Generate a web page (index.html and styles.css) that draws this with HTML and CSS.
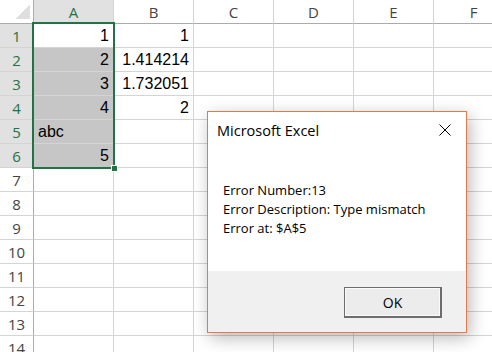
FILE: index.html
```html
<!DOCTYPE html>
<html lang="en">
<head>
    <meta charset="UTF-8">
    <title>Microsoft Excel - Error</title>
    <link rel="stylesheet" href="styles.css">
</head>
<body>
    <div class="sheet">
        <div class="row head-row">
            <div class="corner"><span class="corner-mark"></span></div>
            <div class="col-head active">A</div>
            <div class="col-head">B</div>
            <div class="col-head">C</div>
            <div class="col-head">D</div>
            <div class="col-head">E</div>
            <div class="col-head">F</div>
        </div>
        <div class="row">
            <div class="row-head active">1</div>
            <div class="cell num">1</div>
            <div class="cell num">1</div>
            <div class="cell"></div><div class="cell"></div><div class="cell"></div><div class="cell"></div>
        </div>
        <div class="row">
            <div class="row-head active">2</div>
            <div class="cell num sel">2</div>
            <div class="cell num">1.414214</div>
            <div class="cell"></div><div class="cell"></div><div class="cell"></div><div class="cell"></div>
        </div>
        <div class="row">
            <div class="row-head active">3</div>
            <div class="cell num sel">3</div>
            <div class="cell num">1.732051</div>
            <div class="cell"></div><div class="cell"></div><div class="cell"></div><div class="cell"></div>
        </div>
        <div class="row">
            <div class="row-head active">4</div>
            <div class="cell num sel">4</div>
            <div class="cell num">2</div>
            <div class="cell"></div><div class="cell"></div><div class="cell"></div><div class="cell"></div>
        </div>
        <div class="row">
            <div class="row-head active">5</div>
            <div class="cell sel">abc</div>
            <div class="cell"></div><div class="cell"></div><div class="cell"></div><div class="cell"></div><div class="cell"></div>
        </div>
        <div class="row">
            <div class="row-head active">6</div>
            <div class="cell num sel">5</div>
            <div class="cell"></div><div class="cell"></div><div class="cell"></div><div class="cell"></div><div class="cell"></div>
        </div>
        <div class="row">
            <div class="row-head">7</div>
            <div class="cell"></div><div class="cell"></div><div class="cell"></div><div class="cell"></div><div class="cell"></div><div class="cell"></div>
        </div>
        <div class="row">
            <div class="row-head">8</div>
            <div class="cell"></div><div class="cell"></div><div class="cell"></div><div class="cell"></div><div class="cell"></div><div class="cell"></div>
        </div>
        <div class="row">
            <div class="row-head">9</div>
            <div class="cell"></div><div class="cell"></div><div class="cell"></div><div class="cell"></div><div class="cell"></div><div class="cell"></div>
        </div>
        <div class="row">
            <div class="row-head">10</div>
            <div class="cell"></div><div class="cell"></div><div class="cell"></div><div class="cell"></div><div class="cell"></div><div class="cell"></div>
        </div>
        <div class="row">
            <div class="row-head">11</div>
            <div class="cell"></div><div class="cell"></div><div class="cell"></div><div class="cell"></div><div class="cell"></div><div class="cell"></div>
        </div>
        <div class="row">
            <div class="row-head">12</div>
            <div class="cell"></div><div class="cell"></div><div class="cell"></div><div class="cell"></div><div class="cell"></div><div class="cell"></div>
        </div>
        <div class="row">
            <div class="row-head">13</div>
            <div class="cell"></div><div class="cell"></div><div class="cell"></div><div class="cell"></div><div class="cell"></div><div class="cell"></div>
        </div>
        <div class="row">
            <div class="row-head">14</div>
            <div class="cell"></div><div class="cell"></div><div class="cell"></div><div class="cell"></div><div class="cell"></div><div class="cell"></div>
        </div>

        <!-- selection A1:A6 -->
        <div class="selection"><span class="fill-handle"></span></div>
    </div>

    <div class="dialog">
        <div class="dialog-title">
            <span>Microsoft Excel</span>
            <svg class="close" width="12" height="12" viewBox="0 0 12 12">
                <path d="M0.5 0.5 L11.5 11.5 M11.5 0.5 L0.5 11.5" stroke="#000" stroke-width="1" fill="none"/>
            </svg>
        </div>
        <div class="dialog-body">
            <div>Error Number:13</div>
            <div>Error Description: Type mismatch</div>
            <div>Error at: $A$5</div>
        </div>
        <div class="dialog-footer">
            <button class="ok">OK</button>
        </div>
    </div>
</body>
</html>
```

FILE: styles.css
```css
body {
    margin: 0;
    width: 492px;
    height: 352px;
    overflow: hidden;
    background: #fff;
    font-family: "Liberation Sans", Arial, sans-serif;
}
.sheet {
    position: relative;
    width: 492px;
    height: 352px;
    overflow: hidden;
}
.row {
    display: grid;
    grid-template-columns: 34px repeat(6, 80px);
    height: 24px;
}
.row > div {
    box-sizing: border-box;
    border-right: 1px solid #d4d4d4;
    border-bottom: 1px solid #d4d4d4;
}
.head-row > div {
    border-bottom-color: #ababab;
}
.corner {
    display: flex;
    justify-content: flex-end;
    align-items: flex-end;
    padding: 0 3px 4px 0;
    border-right-color: #ababab !important;
}
.corner-mark {
    width: 15px;
    height: 14px;
    background: linear-gradient(to bottom right, transparent 50%, #dfdfdf 50%);
}
.col-head,
.row-head {
    display: flex;
    align-items: center;
    justify-content: center;
    font-family: "Open Sans", "Noto Sans", sans-serif;
    font-size: 15px;
    color: #444;
}
.row-head {
    border-right-color: #ababab !important;
}
.col-head.active,
.row-head.active {
    background: #e1e1e1;
    color: #217346;
}
.cell {
    display: flex;
    align-items: center;
    padding: 1px 4px 0;
    font-size: 16px;
    color: #000;
}
.cell.num {
    justify-content: flex-end;
}
.cell.sel {
    background: #c6c6c6;
}
.selection {
    position: absolute;
    left: 32px;
    top: 22px;
    width: 83px;
    height: 147px;
    box-sizing: border-box;
    border: 2px solid #217346;
}
.fill-handle {
    position: absolute;
    right: -5px;
    bottom: -5px;
    width: 5px;
    height: 5px;
    background: #217346;
    border: 1px solid #fff;
}
.dialog {
    position: absolute;
    left: 207px;
    top: 111px;
    width: 260px;
    height: 222px;
    box-sizing: border-box;
    border: 1px solid #e8784a;
    background: #fff;
    display: flex;
    flex-direction: column;
    box-shadow: 3px 5px 16px rgba(0, 0, 0, 0.28);
    font-family: "Open Sans", "Noto Sans", sans-serif;
    color: #000;
}
.dialog-title {
    height: 37px;
    display: flex;
    align-items: center;
    justify-content: space-between;
    padding: 0 15px 0 9px;
    font-size: 14.5px;
}
.close {
    margin-top: -2px;
}
.dialog-body {
    flex: 1;
    padding: 32px 0 0 15px;
    font-size: 13px;
    line-height: 19px;
}
.dialog-footer {
    height: 61px;
    background: #f0f0f0;
    display: flex;
    justify-content: flex-end;
    align-items: flex-start;
    padding: 16px 24px 0 0;
    box-sizing: border-box;
}
.ok {
    width: 98px;
    height: 31px;
    box-sizing: border-box;
    border: 1px solid #6d6d6d;
    border-right-width: 2px;
    border-bottom-width: 2px;
    box-shadow: inset 0 0 0 1px #fafafa;
    background: #ececec;
    font-family: "Open Sans", "Noto Sans", sans-serif;
    font-size: 14px;
    color: #000;
    padding: 0;
}
```
